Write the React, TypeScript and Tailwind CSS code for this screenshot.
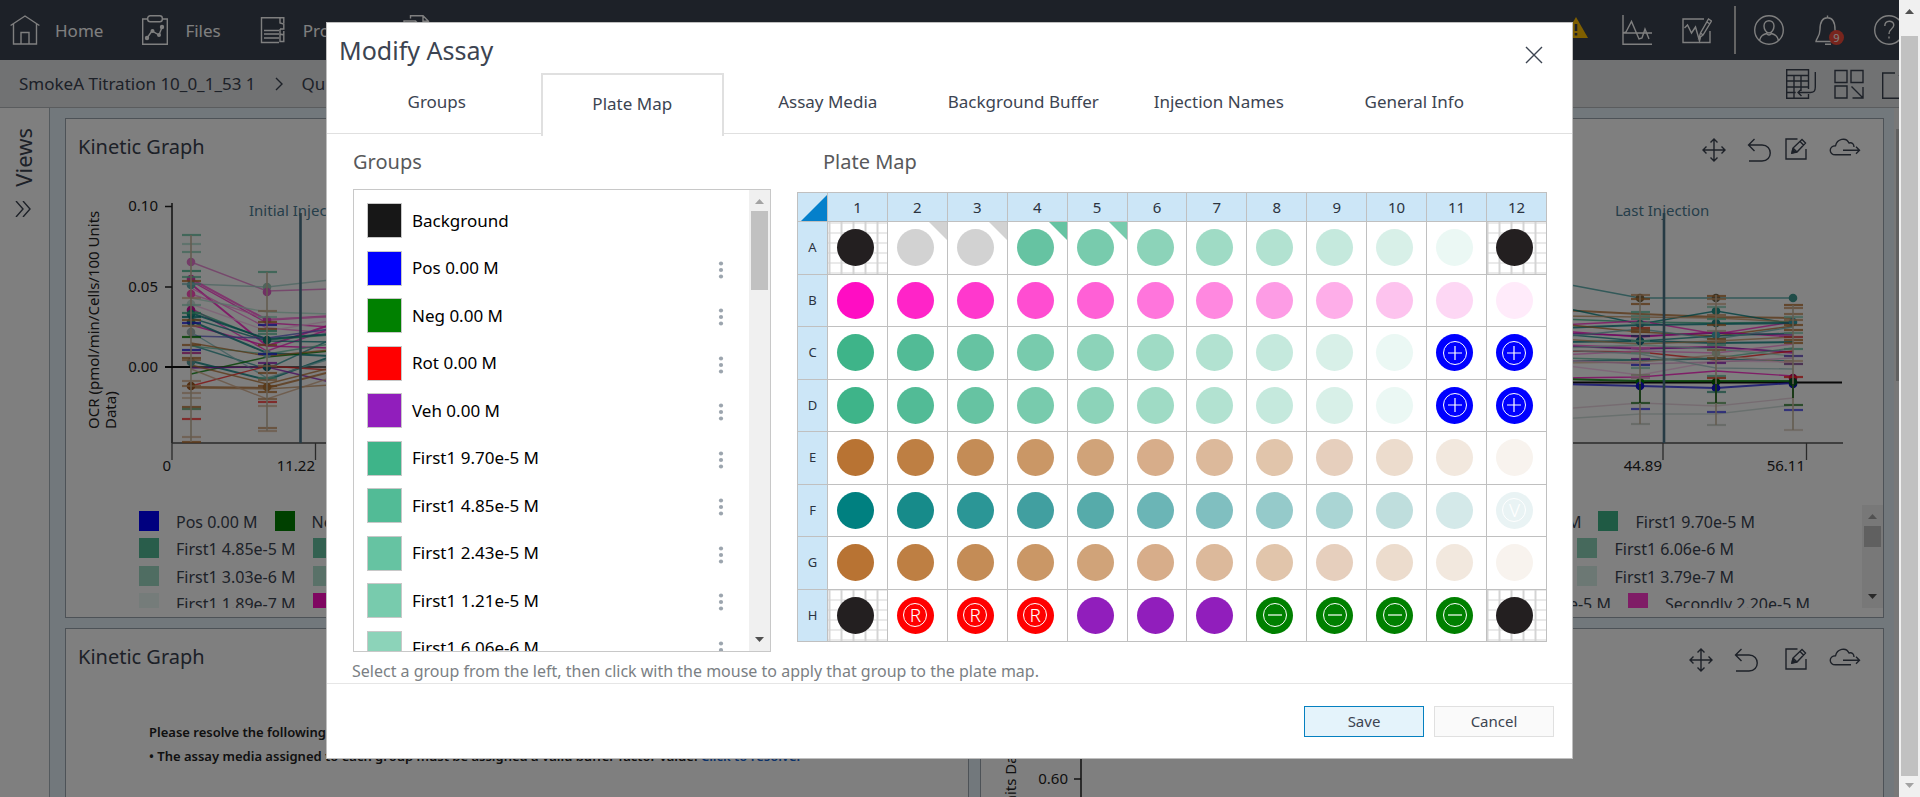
import type { ReactNode } from 'react';

/* ---------- icons ---------- */

type IconProps = { className?: string };

function Svg({ className, box = '0 0 30 30', children }: IconProps & { box?: string; children: ReactNode }) {
  return (
    <svg viewBox={box} className={className} fill="none" stroke="currentColor" strokeWidth="1.4" aria-hidden="true">
      {children}
    </svg>
  );
}

const HomeIcon = () => (
  <Svg className="size-[30px]">
    <path d="M.6 10.5 15 1l14.4 9.500M3.500 9v20h23V9M11 29V17.500h8V29" />
  </Svg>
);
const FilesIcon = () => (
  <Svg className="size-[30px]">
    <path d="M8 4H2.700v25.300h24.600V4H22" />
    <rect x="7.700" y=".8" width="14.600" height="6" rx="2.500" />
    <path d="m7 23 5-7 7 4 3.500-9" />
    <g fill="currentColor" stroke="none">
      <circle cx="7" cy="23" r="2.200" />
      <circle cx="12.500" cy="16" r="2" />
      <circle cx="19" cy="20" r="2" />
      <circle cx="22" cy="12" r="2.200" />
    </g>
  </Svg>
);
const ProjectsIcon = () => (
  <Svg className="size-[30px]">
    <path d="M21 27.500H3.500V2.700h22.300v5.500M6 15.500h15M6 19h15M6 23h15" />
    <path d="M22 3v5l3.800 1v5H22M22 14v5l3.800 1v-4M22 19.500h3.800v7H22z" />
  </Svg>
);
const DocsIcon = () => (
  <Svg className="size-[30px]">
    <path d="M7.500 3.500V.7H20l5.500 5.500V24h-6M20 .7v5.500h5.500M1 29V6h11.500l5.500 5.500V29zM12.500 6v5.500H18" />
  </Svg>
);
const WarningIcon = () => (
  <svg viewBox="0 0 24 21" className="h-[21px] w-6" aria-hidden="true">
    <path d="M12 0 24 21H0z" fill="#ffbf00" />
    <path d="M12 7v7M12 16v2.500" stroke="#3a4250" strokeWidth="2.600" />
  </svg>
);
const TraceIcon = () => (
  <Svg className="size-[30px]">
    <path d="M1 0v29.300h29M1 18h29M1.500 18 4 17l5.500-10.500L17 24l3-1 3-9 4 10" />
  </Svg>
);
const EditTraceIcon = () => (
  <Svg className="size-[30px]">
    <path d="M22 4H1v23.500h27V16M2.500 13l3-3 4 8 4-6 4 14 1-4" />
    <path d="m17 23 1.500-5L26.500 4l3 2-8.500 14zM25 7l3 2M18.500 18l2.500 2" />
  </Svg>
);
const UserIcon = () => (
  <Svg className="size-[30px]">
    <circle cx="15" cy="15" r="14.300" />
    <path d="M10 11c0-7 10-7 10 0 0 3-2 7-5 7s-5-4-5-7zM5.500 25.500c1-5 4-6 7-7 1.500 2 3.500 2 5 0 3 1 6 2 7 7" />
  </Svg>
);
const BellIcon = () => (
  <Svg className="size-[30px]">
    <path d="M13.500 2.500V.5M2 26.500c0-3 4-5 4-12C6 6 9 2.700 13.500 2.700S21 6 21 14.500c0 7 4 9 4 12zM11 29.300h6" />
  </Svg>
);
const HelpIcon = () => (
  <Svg className="size-[30px]">
    <circle cx="15" cy="15" r="14.300" />
    <path d="M10.800 11c0-6.500 9-6 9-1 0 4-4.800 3.500-4.800 9M15 21.500v2" />
  </Svg>
);
const TableReturnIcon = () => (
  <Svg className="size-[30px]">
    <path d="M22.500 20V.7H.7v28.600h21.800V25M.7 6.500h21.800M.7 12h21.800M.7 18h21.800M.7 23.500h9M8 6.500v22.800M15 6.500V22M29.300 3v15c0 4-1 5.500-5 5.500H12M15.500 20 12 23.500l3.500 3.500" />
  </Svg>
);
const TilesIcon = () => (
  <Svg className="size-[30px]">
    <path d="M1 1.500h12v12H1zM17 1.500h12v12H17zM1 17h12v12H1zM17.500 17.500 29 29M29 18v11H18.500" />
  </Svg>
);
const NewTileIcon = () => (
  <Svg className="size-[30px]">
    <path d="M13 4H.7v25.300h26V17M17 7l4-4" />
  </Svg>
);
const MoveIcon = () => (
  <Svg className="size-6" box="0 0 24 24">
    <path d="M12 1v22M1 12h22M8.500 4.500 12 1l3.500 3.500M8.500 19.500 12 23l3.500-3.500M4.500 8.500 1 12l3.500 3.500M19.500 8.500 23 12l-3.500 3.500" />
  </Svg>
);
const UndoIcon = () => (
  <Svg className="size-6" box="0 0 24 24">
    <path d="M7.500 1 1.500 7l6 6M1.500 7H15c11 0 11 16 0 16H2" />
  </Svg>
);
const EditIcon = () => (
  <Svg className="size-[22px]" box="0 0 22 22">
    <path d="M12.500 1H1v20h20v-10M7 15l1-5 9-8.500 3.500 3.500L12 14zM15 3.500 18.500 7M8 10l4 4" />
    <path d="m7 15 .7-3.500L10.500 14z" fill="currentColor" />
  </Svg>
);
const CloudIcon = () => (
  <Svg className="h-[18px] w-8" box="0 0 32 18">
    <path d="M22 16.800H6.500c-7 0-7-9 0-9C8 1 17-1.500 20 5c3-1 5 1 5 4M14 12.300h16.500M27 8.800l3.500 3.500-3.500 3.500" />
  </Svg>
);

/* ---------- scrollbar ---------- */

function ScrollArrow({ down = false, className }: { down?: boolean; className: string }) {
  return (
    <svg viewBox="0 0 9 5" className={`h-[5px] w-[9px] shrink-0 ${className}`} fill="currentColor" aria-hidden="true">
      <path d={down ? 'M0 0h9L4.500 5z' : 'M0 5h9L4.500 0z'} />
    </svg>
  );
}

function Scrollbar({ thumb, up, down }: { thumb: string; up: string; down: string }) {
  return (
    <div className="flex w-[21px] shrink-0 flex-col items-center justify-between bg-[#f0f0f0] py-[9px]">
      <ScrollArrow className={up} />
      <div className={`w-[17px] bg-[#c1c1c1] ${thumb}`} />
      <ScrollArrow down className={down} />
    </div>
  );
}

/* ---------- kinetic chart ---------- */

type Series = { color: string; ys: number[]; width?: number };

const leftX = [191, 267, 330];
const leftSeries: Series[] = [
  { color: '#e878d0', ys: [262, 291, 289] },
  { color: '#a0d0c8', ys: [284, 287, 280] },
  { color: '#ff4bd2', ys: [279, 320, 316], width: 2 },
  { color: '#ff24c8', ys: [281, 323, 327] },
  { color: '#ff0dc3', ys: [284, 346, 325], width: 2 },
  { color: '#ff75dc', ys: [288, 328, 333] },
  { color: '#ff88e0', ys: [294, 319, 317] },
  { color: '#ff24c8', ys: [308, 351, 329] },
  { color: '#ff0dc3', ys: [325, 346, 348] },
  { color: '#fdc3ee', ys: [304, 331, 321] },
  { color: '#3eb489', ys: [310, 340, 335] },
  { color: '#008080', ys: [313, 339, 334], width: 2 },
  { color: '#178b8a', ys: [318, 341, 342] },
  { color: '#008080', ys: [321, 353, 356], width: 2 },
  { color: '#2b9696', ys: [345, 369, 340] },
  { color: '#008080', ys: [361, 380, 357], width: 2 },
  { color: '#80bfc0', ys: [332, 378, 359] },
  { color: '#66c3a2', ys: [346, 354, 344] },
  { color: '#b2e2d1', ys: [298, 312, 314] },
  { color: '#6060d0', ys: [336, 338, 329] },
  { color: '#008000', ys: [374, 357, 351] },
  { color: '#911ebc', ys: [368, 367, 382] },
  { color: '#ff2020', ys: [386, 366, 370] },
  { color: '#b87333', ys: [387, 388, 372], width: 2 },
  { color: '#ca9766', ys: [388, 389, 385] },
  { color: '#b87333', ys: [343, 356, 350] },
  { color: '#b87333', ys: [365, 384, 368] },
  { color: '#d7ad8a', ys: [369, 399, 378] },
];

const rightX = [1560, 1640, 1716, 1793];
const rightSeries: Series[] = [
  { color: '#409f9f', ys: [283, 298, 298, 298] },
  { color: '#b87333', ys: [310, 314, 317, 318], width: 2 },
  { color: '#008080', ys: [307, 324, 311, 324] },
  { color: '#ca9766', ys: [316, 317, 318, 322] },
  { color: '#3eb489', ys: [319, 322, 323, 322] },
  { color: '#ff24c8', ys: [325, 321, 334, 322] },
  { color: '#008080', ys: [328, 325, 324, 323], width: 2 },
  { color: '#b87333', ys: [324, 332, 336, 326] },
  { color: '#911ebc', ys: [333, 336, 333, 335] },
  { color: '#ff0dc3', ys: [331, 337, 332, 337] },
  { color: '#178b8a', ys: [334, 341, 336, 333] },
  { color: '#008080', ys: [342, 341, 343, 342], width: 2 },
  { color: '#6bb5b6', ys: [337, 329, 339, 327] },
  { color: '#ca9766', ys: [339, 344, 341, 337] },
  { color: '#ff4bd2', ys: [345, 348, 347, 353], width: 2 },
  { color: '#911ebc', ys: [346, 349, 347, 352] },
  { color: '#ff2020', ys: [351, 352, 360, 351] },
  { color: '#ff88e0', ys: [355, 351, 353, 344] },
  { color: '#66c3a2', ys: [358, 360, 358, 348] },
  { color: '#2b9696', ys: [361, 360, 359, 361] },
  { color: '#dcb99b', ys: [363, 362, 355, 363] },
  { color: '#fdc3ee', ys: [365, 375, 361, 362] },
  { color: '#9fdbc5', ys: [348, 345, 349, 356] },
  { color: '#e8a8d8', ys: [360, 364, 362, 358] },
  { color: '#a0c8c8', ys: [350, 354, 368, 369] },
  { color: '#ff0dc3', ys: [378, 377, 371, 376] },
  { color: '#e8d0dc', ys: [409, 403, 406, 398] },
  { color: '#c8d8d4', ys: [419, 414, 414, 405] },
  { color: '#2020e0', ys: [384, 386, 388, 383], width: 2 },
  { color: '#008000', ys: [379, 381, 381, 381], width: 2 },
];

type Cap = [number, string];
const caps: { x: number; from: number; to: number; items: Cap[] }[] = [
  {
    x: 191, from: 235, to: 442,
    items: [
      [235, '#66c3a2'], [244, '#b2e2d1'], [252, '#8cd3b9'], [271, '#3eb489'], [277, '#66c3a2'], [281, '#b87333'],
      [284, '#80bfc0'], [298, '#dcb99b'], [305, '#9fdbc5'], [313, '#3eb489'], [317, '#008080'], [320, '#b87333'],
      [323, '#2020e0'], [326, '#ca9766'], [337, '#008000'], [345, '#b87333'], [350, '#2020e0'], [353, '#c02090'],
      [358, '#b87333'], [360, '#ca9766'], [381, '#d7ad8a'], [386, '#ca9766'], [393, '#dcb99b'], [398, '#e1c5ab'],
      [407, '#b87333'], [409, '#66a070'], [419, '#ff3030'], [437, '#dcb99b'], [442, '#b87333'],
    ],
  },
  {
    x: 267, from: 272, to: 431,
    items: [
      [272, '#66c3a2'], [311, '#c8a880'], [317, '#9fdbc5'], [322, '#b87333'], [325, '#2020e0'], [329, '#b87333'],
      [331, '#3eb489'], [334, '#66c3a2'], [345, '#b87333'], [354, '#2020e0'], [363, '#911ebc'], [366, '#ca9766'],
      [373, '#b87333'], [378, '#66c3a2'], [380, '#ca9766'], [386, '#b87333'], [392, '#b87333'], [399, '#ca9766'],
      [402, '#ff3030'], [406, '#dcb99b'], [428, '#ca9766'], [431, '#dcb99b'],
    ],
  },
  {
    x: 1640, from: 295, to: 424,
    items: [
      [295, '#ca9766'], [299, '#b87333'], [304, '#b87333'], [312, '#66c3a2'], [316, '#8cd3b9'], [319, '#66c3a2'],
      [323, '#8cd3b9'], [328, '#e04020'], [330, '#b87333'], [332, '#b87333'], [336, '#404090'], [341, '#66c3a2'],
      [348, '#ff75dc'], [353, '#9fdbc5'], [359, '#911ebc'], [365, '#3030e0'], [368, '#8cd3b9'], [375, '#c0c0a8'],
      [378, '#e0a0c0'], [403, '#308030'], [409, '#4040f0'], [424, '#c8d0c8'],
    ],
  },
  {
    x: 1716, from: 295, to: 425,
    items: [
      [296, '#b87333'], [299, '#ca9766'], [304, '#dcb99b'], [307, '#8cd3b9'], [315, '#ca9766'], [319, '#66c3a2'],
      [325, '#b87333'], [331, '#c8b8a0'], [339, '#b87333'], [342, '#ca9766'], [345, '#66c3a2'], [350, '#ca9766'],
      [358, '#b87333'], [363, '#911ebc'], [376, '#66c3a2'], [378, '#e04020'], [392, '#40a088'], [403, '#60a060'],
      [412, '#4040f0'], [425, '#c8d0c8'],
    ],
  },
  {
    x: 1793, from: 305, to: 430,
    items: [
      [305, '#b87333'], [308, '#ca9766'], [314, '#ca9766'], [317, '#8cd3b9'], [320, '#ca9766'], [325, '#b87333'],
      [330, '#b87333'], [333, '#8cd3b9'], [337, '#e04040'], [340, '#b87333'], [343, '#b87333'], [349, '#66c3a2'],
      [356, '#6040c0'], [361, '#dcb99b'], [364, '#804090'], [377, '#ff2020'], [405, '#308030'], [410, '#4040f0'],
      [430, '#dcd0c4'],
    ],
  },
];

const markers: [number, number, string][] = [
  [191, 262, '#e878d0'], [191, 279, '#e040b0'], [191, 285, '#60b0b0'], [191, 294, '#ff50c0'], [191, 304, '#c8e0d8'],
  [191, 310, '#d010a0'], [191, 314, '#1c8c80'], [191, 322, '#2b7c80'], [191, 332, '#a8b8b8'], [191, 362, '#5c9c9c'],
  [191, 386, '#a05820'], [267, 287, '#9fc8b8'], [267, 292, '#e060c8'], [267, 320, '#e040c0'], [267, 340, '#108078'],
  [267, 354, '#80b8b8'], [267, 367, '#106878'], [267, 387, '#b07838'], [1640, 298, '#806840'], [1716, 298, '#706850'],
  [1793, 298, '#409890'], [1640, 324, '#308890'], [1716, 311, '#209088'], [1716, 323, '#208080'], [1793, 322, '#30a0b0'],
  [1640, 341, '#106880'], [1716, 335, '#40a8b8'], [1716, 353, '#b8c8b0'], [1640, 382, '#008000'], [1640, 386, '#1010d0'],
  [1716, 382, '#006000'], [1716, 388, '#1010d0'], [1793, 378, '#c00060'], [1793, 384, '#1010c0'], [1793, 382, '#005020'],
];

function SeriesLines({ xs, series }: { xs: number[]; series: Series[] }) {
  return (
    <>
      {series.map((s, i) => (
        <polyline
          key={i}
          points={s.ys.map((y, k) => `${xs[k]},${y}`).join(' ')}
          fill="none"
          stroke={s.color}
          strokeWidth={s.width ?? 1.4}
          opacity="0.8"
        />
      ))}
    </>
  );
}

function KineticChart() {
  return (
    <svg viewBox="66 170 1817 335" className="block w-full" fontSize="15" role="img" aria-label="Oxygen consumption rate over time">
      <g fill="#222">
        <g textAnchor="end">
          <text x="158" y="211">0.10</text>
          <text x="158" y="292">0.05</text>
          <text x="158" y="372">0.00</text>
          <text x="171" y="471">0</text>
          <text x="315" y="471">11.22</text>
          <text x="1662" y="471">44.89</text>
          <text x="1805" y="471">56.11</text>
        </g>
        <text transform="translate(99 429) rotate(-90)">OCR (pmol/min/Cells/100 Units</text>
        <text transform="translate(116 429) rotate(-90)">Data)</text>
      </g>
      <path d="M172 203v240M165 206.500h7M165 287h7" stroke="#222" strokeWidth="1.500" fill="none" />
      <path d="M165 367h25M1560 382.500h282" stroke="#111" strokeWidth="1.800" fill="none" />
      <path d="M190 367h140" stroke="#333" strokeWidth="1.400" fill="none" />
      <path d="M172 443h1671M172 443v17M315.500 443v17M1663 443v17M1806.500 443v17" stroke="#555" strokeWidth="1.300" fill="none" />
      <SeriesLines xs={leftX} series={leftSeries} />
      <SeriesLines xs={rightX} series={rightSeries} />
      {markers.map(([x, y, c], i) => (
        <circle key={i} cx={x} cy={y} r="4.300" fill={c} />
      ))}
      {caps.map((c) => (
        <g key={c.x}>
          {c.items.map(([y, color]) => (
            <path key={y} d={`M${c.x - 9} ${y}h19`} stroke={color} strokeWidth="2.200" opacity="0.8" />
          ))}
          <path d={`M${c.x} ${c.from}V${c.to}`} stroke="#c8b8a0" strokeWidth="1.600" />
        </g>
      ))}
      <path d="M1640 384v19M1716 384v19M1793 384v14" stroke="#106010" strokeWidth="1.600" />
      <path d="M300.500 213v230M1664 213v230" stroke="#4c7488" strokeWidth="2.600" />
      <g fill="#4c7c94">
        <text x="249" y="216">Initial Injection</text>
        <text x="1615" y="216">Last Injection</text>
      </g>
    </svg>
  );
}

/* ---------- legend ---------- */

function LegendItem({ swatch, children }: { swatch?: string; children: ReactNode }) {
  return (
    <li className="flex shrink-0 items-center gap-[17px]">
      {swatch && <span className={`size-5 ${swatch}`} />}
      <span className="pt-[2px] whitespace-nowrap">{children}</span>
    </li>
  );
}

function Legend() {
  return (
    <div className="flex h-[103px] overflow-hidden text-base text-[#3b4452]">
      <div className="grid h-[112px] flex-1 grid-rows-4 pt-[2px] pl-[73px]">
        <ul className="flex items-center gap-[17px] pr-[107px]">
          <LegendItem swatch="bg-[#0000ff]">Pos 0.00 M</LegendItem>
          <LegendItem swatch="bg-[#008000]">Neg 0.00 M</LegendItem>
          <li className="flex-1" />
          <LegendItem>Veh 0.00 M</LegendItem>
          <LegendItem swatch="bg-[#3eb489]">First1 9.70e-5 M</LegendItem>
        </ul>
        <ul className="flex items-center gap-[17px] pr-[128px]">
          <LegendItem swatch="bg-[#52bb96]">First1 4.85e-5 M</LegendItem>
          <LegendItem swatch="bg-[#66c3a2]">First1 2.43e-5 M</LegendItem>
          <li className="flex-1" />
          <LegendItem swatch="bg-[#8cd3b9]">First1 6.06e-6 M</LegendItem>
        </ul>
        <ul className="flex items-center gap-[17px] pr-[128px]">
          <LegendItem swatch="bg-[#9fdbc5]">First1 3.03e-6 M</LegendItem>
          <LegendItem swatch="bg-[#b2e2d1]">First1 1.52e-6 M</LegendItem>
          <li className="flex-1" />
          <LegendItem swatch="bg-[#d8f0e8]">First1 3.79e-7 M</LegendItem>
        </ul>
        <ul className="flex items-center gap-[17px] pr-[52px]">
          <LegendItem swatch="bg-[#ebf8f4]">First1 1.89e-7 M</LegendItem>
          <LegendItem swatch="bg-[#ff0dc3]">Secondly 8.80e-5 M</LegendItem>
          <li className="flex-1" />
          <LegendItem>Secondly 4.40e-5 M</LegendItem>
          <LegendItem swatch="bg-[#ff38cd]">Secondly 2.20e-5 M</LegendItem>
        </ul>
      </div>
      <Scrollbar thumb="mb-auto mt-[7px] h-[21px]" up="text-[#a3a3a3]" down="text-[#505050]" />
    </div>
  );
}

/* ---------- page behind the dialog ---------- */

function NavLink({ icon, children }: { icon: ReactNode; children: ReactNode }) {
  return (
    <a href="#" className="flex items-center gap-[15px] text-[17px]">
      {icon}
      <span className="pt-[2px]">{children}</span>
    </a>
  );
}

function IconButton({ label, children }: { label: string; children: ReactNode }) {
  return (
    <button type="button" aria-label={label} className="relative shrink-0">
      {children}
    </button>
  );
}

function TopBar() {
  return (
    <header className="flex h-[60px] shrink-0 items-center justify-between bg-[#3a4250] pl-[10px] text-white">
      <nav className="flex items-center gap-[37px]">
        <NavLink icon={<HomeIcon />}>Home</NavLink>
        <NavLink icon={<FilesIcon />}>Files</NavLink>
        <NavLink icon={<ProjectsIcon />}>Projects</NavLink>
        <NavLink icon={<DocsIcon />}>Docs</NavLink>
      </nav>
      <div className="-mr-[5px] flex items-center gap-[30px]">
        <span className="mr-1"><IconButton label="Warnings"><WarningIcon /></IconButton></span>
        <IconButton label="Traces"><TraceIcon /></IconButton>
        <IconButton label="Edit traces"><EditTraceIcon /></IconButton>
        <div className="-mr-3 -ml-2 h-12 w-[2px] bg-[#c8c8c8]" />
        <IconButton label="Account"><UserIcon /></IconButton>
        <IconButton label="Notifications">
          <BellIcon />
          <span className="absolute right-0 bottom-0 size-[15px] rounded-full bg-[#f04a3a] text-center text-[11px] leading-[15px]">9</span>
        </IconButton>
        <IconButton label="Help"><HelpIcon /></IconButton>
      </div>
    </header>
  );
}

function Breadcrumbs() {
  return (
    <div className="flex h-12 shrink-0 items-center justify-between border-b border-[#b4b8bc] bg-[#e2e4e7] pl-[19px] text-[17px] text-[#3a4250]">
      <nav className="flex items-center gap-[19px]">
        <a href="#">SmokeA Titration 10_0_1_53 1</a>
        <Svg className="h-[14px] w-2" box="0 0 8 14"><path d="m1 1 6 6-6 6" /></Svg>
        <a href="#">Quick View</a>
      </nav>
      <div className="-mr-[13px] flex items-center gap-[18px]">
        <IconButton label="Export table"><TableReturnIcon /></IconButton>
        <IconButton label="Arrange tiles"><TilesIcon /></IconButton>
        <IconButton label="New tile"><NewTileIcon /></IconButton>
      </div>
    </div>
  );
}

function Panel({ className, tools, children }: { className: string; tools?: ReactNode; children: ReactNode }) {
  return (
    <section className={`overflow-hidden border border-[#9aa4ae] bg-white ${className}`}>
      <div className="flex h-[51px] items-start justify-between pt-[14px] pr-[22px] pl-3">
        <h2 className="text-xl leading-7 text-[#3a4250]">Kinetic Graph</h2>
        {tools}
      </div>
      {children}
    </section>
  );
}

function Background() {
  return (
    <div className="flex h-full flex-col overflow-hidden">
      <TopBar />
      <Breadcrumbs />
      <div className="flex min-h-0 flex-1">
        <aside className="flex w-[50px] shrink-0 flex-col items-center gap-[14px] border-r border-[#a8b4bc] bg-white pt-[20px] pr-[3px] text-[#3a4250]">
          <span className="rotate-180 text-[22px] leading-[30px] [writing-mode:vertical-rl]">Views</span>
          <IconButton label="Expand views">
            <Svg className="size-4" box="0 0 16 16"><path d="m1 0 7 8-7 8M8 0l7 8-7 8" /></Svg>
          </IconButton>
        </aside>
        <main className="flex min-w-0 flex-1 flex-col gap-[10px] overflow-hidden bg-[#e4f0f8] pt-[10px] pr-[10px] pl-[15px]">
          <Panel
            className="h-[500px] shrink-0"
            tools={
              <div className="flex items-start pt-[5px] text-[#3a4250]">
                <span className="mr-[21px]"><IconButton label="Pan"><MoveIcon /></IconButton></span>
                <span className="mr-[14px]"><IconButton label="Undo"><UndoIcon /></IconButton></span>
                <span className="mr-[22px]"><IconButton label="Edit"><EditIcon /></IconButton></span>
                <IconButton label="Upload"><CloudIcon /></IconButton>
              </div>
            }
          >
            <KineticChart />
            <Legend />
          </Panel>
          <div className="grid flex-1 grid-cols-2 gap-[11px]">
            <Panel className="h-[400px]">
              <div className="pt-10 pl-[83px] text-[13px] leading-6 font-semibold text-[#222]">
                <p>Please resolve the following:</p>
                <p className="whitespace-nowrap">
                  • The assay media assigned to each group must be assigned a valid buffer factor value.{' '}
                  <a href="#" className="text-[#1464d2]">Click to resolve.</a>
                </p>
              </div>
            </Panel>
            <Panel
              className="h-[400px]"
              tools={
                <div className="flex items-start pt-[5px] text-[#3a4250]">
                  <span className="mr-[21px]"><IconButton label="Pan"><MoveIcon /></IconButton></span>
                  <span className="mr-[27px]"><IconButton label="Undo"><UndoIcon /></IconButton></span>
                  <span className="mr-[22px]"><IconButton label="Edit"><EditIcon /></IconButton></span>
                  <IconButton label="Upload"><CloudIcon /></IconButton>
                </div>
              }
            >
              <svg viewBox="981 680 902 340" className="block w-full" fontSize="15" fill="#222" role="img" aria-label="Kinetic graph axis">
                <text transform="translate(1016 737) rotate(-90)" textAnchor="end">OCR (pmol/min/Cells/100 Units Data)</text>
                <text x="1068" y="784" textAnchor="end">0.60</text>
                <path d="M1081 700v300M1074 779h7" stroke="#222" strokeWidth="1.500" />
              </svg>
            </Panel>
          </div>
        </main>
        <div className="w-[5px] shrink-0 bg-[#f0f0f0] pt-[21px] pl-[2px]">
          <div className="h-[252px] bg-[#c1c1c1]" />
        </div>
      </div>
    </div>
  );
}

/* ---------- dialog ---------- */

const groups = [
  { name: 'Background', color: 'bg-[#171717]' },
  { name: 'Pos 0.00 M', color: 'bg-[#0000ff]' },
  { name: 'Neg 0.00 M', color: 'bg-[#008000]' },
  { name: 'Rot 0.00 M', color: 'bg-[#ff0000]' },
  { name: 'Veh 0.00 M', color: 'bg-[#911ebc]' },
  { name: 'First1 9.70e-5 M', color: 'bg-[#3eb489]' },
  { name: 'First1 4.85e-5 M', color: 'bg-[#52bb96]' },
  { name: 'First1 2.43e-5 M', color: 'bg-[#66c3a2]' },
  { name: 'First1 1.21e-5 M', color: 'bg-[#78cbad]' },
  { name: 'First1 6.06e-6 M', color: 'bg-[#8cd3b9]' },
];

const tabs = ['Groups', 'Plate Map', 'Assay Media', 'Background Buffer', 'Injection Names', 'General Info'];

type Well = { color: string; mark?: '+' | '-' | 'R' | 'V'; hatched?: boolean; flagged?: boolean };

const plain = (colors: string[]): Well[] => colors.map((color) => ({ color }));
const repeat = (well: Well, n: number): Well[] => Array.from({ length: n }, () => well);

const black: Well = { color: '#231f20', hatched: true };
const pos: Well = { color: '#0000ff', mark: '+' };
const neg: Well = { color: '#008000', mark: '-' };
const rot: Well = { color: '#ff0000', mark: 'R' };
const mint = ['#3eb489', '#52bb96', '#66c3a2', '#78cbad', '#8cd3b9', '#9fdbc5', '#b2e2d1', '#c5e9dd', '#d8f0e8', '#ebf8f4'];
const pink = ['#ff0dc3', '#ff24c8', '#ff38cd', '#ff4dd1', '#ff60d6', '#ff75dc', '#ff88e0', '#fd9ce5', '#feaee9', '#fdc3ee', '#fdd7f4', '#ffebfa'];
const copper = ['#b87333', '#be7f43', '#c48c56', '#ca9766', '#d0a379', '#d7ad8a', '#dcb99b', '#e1c5ab', '#e6cfbd', '#ecdccd', '#f2e8de', '#f8f3ee'];
const teal = ['#008080', '#178b8a', '#2b9696', '#419fa0', '#56abaa', '#6bb5b6', '#80bfc0', '#95caca', '#aad5d4', '#bfdedd', '#d4e9e9'];

const plate: { row: string; wells: Well[] }[] = [
  {
    row: 'A',
    wells: [
      black,
      ...repeat({ color: '#d2d2d2', flagged: true }, 2),
      { color: '#66c3a2', flagged: true },
      { color: '#78cbad', flagged: true },
      ...plain(mint.slice(4)),
      black,
    ],
  },
  { row: 'B', wells: plain(pink) },
  { row: 'C', wells: [...plain(mint), pos, pos] },
  { row: 'D', wells: [...plain(mint), pos, pos] },
  { row: 'E', wells: plain(copper) },
  { row: 'F', wells: [...plain(teal), { color: '#e9f3f4', mark: 'V' }] },
  { row: 'G', wells: plain(copper) },
  { row: 'H', wells: [black, ...repeat(rot, 3), ...repeat({ color: '#911ebc' }, 3), ...repeat(neg, 4), black] },
];

function WellMark({ mark }: { mark: '+' | '-' | 'R' | 'V' }) {
  return (
    <span className="flex size-6 items-center justify-center rounded-full border border-white text-[19px] leading-none font-light text-white">
      {mark === 'R' || mark === 'V' ? (
        mark
      ) : (
        <svg viewBox="0 0 16 16" className="size-4" stroke="currentColor" strokeWidth="1.200" aria-hidden="true">
          <path d={mark === '+' ? 'M1 8h14M8 1v14' : 'M1 8h14'} />
        </svg>
      )}
    </span>
  );
}

function PlateTable() {
  return (
    <table className="mt-[3px] h-[450px] w-full table-fixed border-collapse text-[#2b3340]">
      <thead>
        <tr className="h-[29px] bg-[#cce6f7] text-[15px]">
          <th className="w-[30px] border border-[#c0c0c0] p-0 align-bottom" aria-label="Select all wells">
            <svg viewBox="0 0 26 26" className="ml-auto block size-[26px]" aria-hidden="true">
              <path d="M26 0v26H0z" fill="#0580cb" />
            </svg>
          </th>
          {plate[0].wells.map((_, i) => (
            <th key={i} scope="col" className="border border-[#c0c0c0] p-0 leading-5 font-normal">{i + 1}</th>
          ))}
        </tr>
      </thead>
      <tbody>
        {plate.map(({ row, wells }) => (
          <tr key={row}>
            <th scope="row" className="border border-[#c0c0c0] bg-[#cce6f7] p-0 text-[13px] font-normal">{row}</th>
            {wells.map((well, i) => (
              <td
                key={i}
                className={`relative border border-[#c0c0c0] p-0 ${
                  well.hatched
                    ? 'bg-[linear-gradient(to_right,#d4d4d4_2px,transparent_2px),linear-gradient(to_bottom,#d4d4d4_1px,transparent_1px)] bg-[size:12px_10px]'
                    : ''
                }`}
              >
                {well.flagged && (
                  <svg viewBox="0 0 18 18" className="absolute top-0 right-0 size-[18px]" aria-hidden="true">
                    <path d="M0 0h18v18z" fill={well.color} />
                  </svg>
                )}
                <button
                  type="button"
                  aria-label={`Well ${row}${i + 1}`}
                  className="ml-[9px] flex size-[37px] items-center justify-center rounded-full"
                  style={{ backgroundColor: well.color }}
                >
                  {well.mark && <WellMark mark={well.mark} />}
                </button>
              </td>
            ))}
          </tr>
        ))}
      </tbody>
    </table>
  );
}

function GroupList() {
  return (
    <div className="flex h-[463px] overflow-hidden border border-[#c8c8c8]">
      <ul className="grid h-[482px] flex-1 grid-rows-10 pt-[7px] pr-[25px] pl-[13px] text-[17px] text-black">
        {groups.map(({ name, color }, i) => (
          <li key={name} className="flex h-[47px] items-center gap-[10px]">
            <span className={`size-[35px] border border-[#c8c8c8] ${color}`} />
            <span className="flex-1">{name}</span>
            {i > 0 && (
              <button type="button" aria-label={`Options for ${name}`}>
                <svg viewBox="0 0 6 20" className="mt-[3px] h-5 w-[6px]" fill="#9ca5ae" aria-hidden="true">
                  <circle cx="3" cy="3.500" r="2.100" />
                  <circle cx="3" cy="10" r="2.100" />
                  <circle cx="3" cy="16.500" r="2.100" />
                </svg>
              </button>
            )}
          </li>
        ))}
      </ul>
      <Scrollbar thumb="mb-auto mt-[7px] h-[79px]" up="text-[#a3a3a3]" down="text-[#505050]" />
    </div>
  );
}

function ModifyAssayDialog() {
  return (
    <div role="dialog" aria-modal="true" aria-labelledby="dialog-title" className="w-[1247px] max-w-full border border-[#bfbfbf] bg-white">
      <div className="flex h-[50px] items-start justify-between pr-[29px] pl-3">
        <h1 id="dialog-title" className="pt-[9px] text-[25px] leading-9 text-[#3c4451]">Modify Assay</h1>
        <button type="button" aria-label="Close" className="mt-[23px] text-[#3c4451]">
          <Svg className="size-[18px]" box="0 0 18 18"><path d="m1 1 16 16M17 1 1 17" /></Svg>
        </button>
      </div>
      <div role="tablist" className="grid h-[61px] grid-cols-6 items-start border-b border-[#e0e0e0] pr-[60px] pl-3 text-[17px] text-[#3c4451]">
        {tabs.map((tab) => (
          <button
            key={tab}
            type="button"
            role="tab"
            aria-selected={tab === 'Plate Map'}
            className={`mx-[6px] whitespace-nowrap ${
              tab === 'Plate Map' ? 'h-[63px] border-2 border-b-0 border-[#e0e0e0] bg-white pb-1' : 'h-[58px]'
            }`}
          >
            {tab}
          </button>
        ))}
      </div>
      <div className="flex gap-[26px] pr-[25px] pl-[26px]">
        <section className="w-[418px] shrink-0">
          <h2 className="text-xl leading-[55px] text-[#58595b]">Groups</h2>
          <GroupList />
        </section>
        <section className="min-w-0 flex-1">
          <h2 className="pl-[26px] text-xl leading-[55px] text-[#58595b]">Plate Map</h2>
          <PlateTable />
        </section>
      </div>
      <p className="h-[31px] pt-2 pl-[25px] text-base leading-[22px] text-[#7b7f84]">
        Select a group from the left, then click with the mouse to apply that group to the plate map.
      </p>
      <div className="flex justify-end gap-[10px] border-t border-[#e6e6e6] pt-[22px] pr-[18px] pb-[21px] text-[15px] text-[#3c4451]">
        <button type="button" className="h-[31px] w-[120px] border border-[#0580c0] bg-[#e4f3fb]">Save</button>
        <button type="button" className="h-[31px] w-[120px] border border-[#e0e0e0] bg-[#fafafa]">Cancel</button>
      </div>
    </div>
  );
}

export default function App() {
  return (
    <div className="flex h-screen overflow-hidden font-['Noto_Sans',sans-serif]">
      <div className="relative min-w-0 flex-1">
        <Background />
        <div className="absolute inset-0 z-10 flex items-start justify-center bg-black/50 pt-[22px]">
          <ModifyAssayDialog />
        </div>
      </div>
      <Scrollbar thumb="mt-[22px] mb-[7px] flex-1" up="text-[#505050]" down="text-[#a3a3a3]" />
    </div>
  );
}
